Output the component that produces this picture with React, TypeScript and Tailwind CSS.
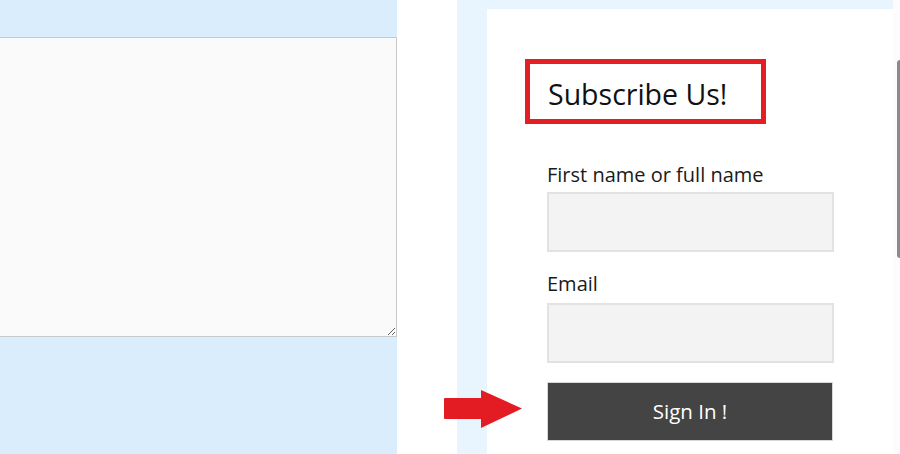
const App = () => {
  return (
    <div className="relative flex h-[454px] w-[900px] overflow-hidden bg-white font-['Open_Sans',sans-serif]">
      {/* Left panel with message box */}
      <div className="w-[397px] shrink-0 bg-[#d9edfd] pt-[37px]">
        <textarea className="block h-[300px] w-full border border-l-0 border-[#c8c8c8] bg-[#fafafa]" />
      </div>

      <div className="w-[60px] shrink-0 bg-white" />

      {/* Sidebar */}
      <div className="flex flex-1 bg-[#e8f5fe] pl-[30px] pt-[9px]">
        <div className="flex-1 bg-white pl-[38px] pt-[50px]">
          <div className="inline-block w-[241px] border-[5px] border-[#e31e24] px-[18px] pt-[11px] pb-[6px]">
            <h2 className="text-[28.5px] leading-[38px] text-[#111]">Subscribe Us!</h2>
          </div>

          <form className="ml-[22px] w-[287px] pt-[37px]">
            <label className="block text-[20px] leading-[28px] text-[#1a1a1a]">First name or full name</label>
            <input className="mt-[3px] block h-[60px] w-full border-2 border-[#e2e2e2] bg-[#f3f3f3]" />
            <label className="mt-[18px] block text-[20px] leading-[28px] text-[#1a1a1a]">Email</label>
            <input className="mt-[5px] block h-[60px] w-full border-2 border-[#e2e2e2] bg-[#f3f3f3]" />
            <button
              type="button"
              className="mt-[19px] block h-[59px] w-[286px] border border-[#d8d8d8] bg-[#444444] text-[20.5px] text-white"
            >
              Sign In !
            </button>
          </form>
        </div>
      </div>

      {/* Scroll track */}
      <div className="w-[7px] shrink-0 bg-[#fcfcfc] pt-[60px] pl-[4px]">
        <div className="h-[198px] w-[3px] rounded-tl-[3px] rounded-bl-[3px] bg-[#8a8a8a]" />
      </div>

      {/* Red pointer arrow */}
      <svg
        className="absolute left-[444px] top-[390px]"
        width="78"
        height="38"
        viewBox="0 0 78 38"
      >
        <path d="M1 8 H37 V0 L78 18.5 L37 38 V29 H1 Q0 29 0 28 V9 Q0 8 1 8 Z" fill="#e31b23" />
      </svg>
    </div>
  );
};

export default App;
